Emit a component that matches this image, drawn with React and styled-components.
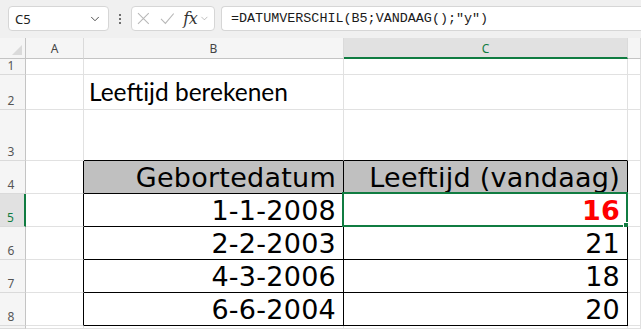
import React from "react";
import styled, { createGlobalStyle } from "styled-components";
import { ChevronDown } from "lucide-react";

const Global = createGlobalStyle`
  html, body { margin: 0; padding: 0; background: #ffffff; }
  body { font-family: "Noto Sans", "DejaVu Sans", sans-serif; overflow: hidden; }
  * { box-sizing: border-box; }
`;

const Page = styled.div`
  width: 641px;
  height: 329px;
  display: flex;
  flex-direction: column;
  overflow: hidden;
  background: #ffffff;
`;

const FormulaBar = styled.div`
  height: 38px;
  flex: none;
  display: flex;
  align-items: flex-start;
  padding: 6px 0 0 8px;
  background: #f0f0f0;
`;

const Box = styled.div`
  height: 25px;
  display: flex;
  align-items: center;
  background: #ffffff;
  border: 1px solid #d6d6d6;
  border-radius: 4px;
`;

const NameBox = styled(Box)`
  width: 101px;
  padding: 0 6px 0 6px;
  justify-content: space-between;
  font-family: "Noto Sans", sans-serif;
  font-size: 13px;
  color: #222;
`;

const Dots = styled.div`
  width: 22px;
  height: 25px;
  display: flex;
  flex-direction: column;
  align-items: center;
  justify-content: center;
  gap: 2px;
  & > i {
    display: block;
    width: 2px;
    height: 2px;
    border-radius: 1px;
    background: #444;
  }
`;

const IconBox = styled(Box)`
  width: 84px;
  padding: 0 4px 0 5px;
`;

const Spacer = styled.span`
  display: block;
  width: ${(p) => p.$w}px;
`;

const Fx = styled.span`
  font-family: "DejaVu Serif", "Liberation Serif", serif;
  font-style: italic;
  font-size: 16px;
  color: #333;
  margin-left: 9px;
  letter-spacing: -0.5px;
`;

const FormulaInput = styled(Box)`
  flex: 1;
  margin-left: 6px;
  border-right: none;
  border-radius: 4px 0 0 4px;
  padding-left: 9px;
  font-family: "Liberation Mono", "DejaVu Sans Mono", monospace;
  font-size: 13.4px;
  color: #1a1a1a;
`;

const Sheet = styled.div`
  flex: 1;
  display: grid;
  grid-template-columns: 26px 58px 260px 284px 1fr;
  grid-template-rows: 21px 16px 35px 51px repeat(5, 33px) 1fr;
`;

const Corner = styled.div`
  background: #f5f5f5;
  border-right: 1px solid #c4c4c4;
  border-bottom: 1px solid #c4c4c4;
  position: relative;
  &::after {
    content: "";
    position: absolute;
    right: 3px;
    bottom: 3px;
    width: 0;
    height: 0;
    border-left: 10px solid transparent;
    border-bottom: 10px solid #dadada;
  }
`;

const ColHead = styled.div`
  display: flex;
  align-items: center;
  justify-content: center;
  font-family: "Noto Sans", sans-serif;
  font-size: 12px;
  padding-top: 1px;
  color: ${(p) => (p.$sel ? "#107c41" : "#444")};
  background: ${(p) => (p.$sel ? "#e1e1e1" : "#f5f5f5")};
  border-right: 1px solid #dadada;
  border-bottom: ${(p) => (p.$sel ? "2px solid #107c41" : "1px solid #c4c4c4")};
`;

const RowHead = styled.div`
  display: flex;
  align-items: flex-end;
  justify-content: center;
  padding-bottom: 0;
  padding-right: 3px;
  font-family: "Noto Sans", sans-serif;
  font-size: 12px;
  line-height: 16px;
  color: ${(p) => (p.$sel ? "#107c41" : "#555")};
  background: ${(p) => (p.$sel ? "#e1e1e1" : "#f5f5f5")};
  border-bottom: 1px solid #dadada;
  border-right: ${(p) => (p.$sel ? "2px solid #107c41" : "1px solid #c4c4c4")};
`;

const Cell = styled.div`
  position: relative;
  display: flex;
  align-items: flex-end;
  justify-content: ${(p) => (p.$right ? "flex-end" : "flex-start")};
  background: ${(p) => p.$bg || "#ffffff"};
  border-right: 1px solid ${(p) => (p.$rb ? "#000" : "#e1e1e1")};
  border-bottom: 1px solid ${(p) => (p.$bb ? "#000" : "#e1e1e1")};
  min-width: 0;
`;

const Title = styled.span`
  font-family: "Lato", "Open Sans", sans-serif;
  font-size: 24.5px;
  line-height: 28px;
  color: #000;
  padding: 0 0 3px 5px;
  white-space: nowrap;
`;

const Big = styled.span`
  font-family: "DejaVu Sans", "Verdana", sans-serif;
  font-size: 27px;
  letter-spacing: 0.25px;
  line-height: 30px;
  color: ${(p) => (p.$red ? "#ff0000" : "#000")};
  font-weight: ${(p) => (p.$bold ? 700 : 400)};
  padding: 0 7px 0 0;
  white-space: nowrap;
`;

const Selection = styled.div`
  position: absolute;
  left: -2px;
  top: -2px;
  right: -1px;
  bottom: -1px;
  border: 2px solid #107c41;
  pointer-events: none;
  &::after {
    content: "";
    position: absolute;
    right: -4px;
    bottom: -4px;
    width: 5px;
    height: 5px;
    background: #107c41;
    border: 1px solid #fff;
  }
`;

const rows = [
  { n: 1, label: "1" },
  { n: 2, label: "2", title: "Leeftijd berekenen" },
  { n: 3, label: "3", under: true },
  { n: 4, label: "4", head: true, b: "Gebortedatum", c: "Leeftijd (vandaag)" },
  { n: 5, label: "5", b: "1-1-2008", c: "16", sel: true },
  { n: 6, label: "6", b: "2-2-2003", c: "21" },
  { n: 7, label: "7", b: "4-3-2006", c: "18" },
  { n: 8, label: "8", b: "6-6-2004", c: "20" },
  { n: 9, label: "" },
];

function XIcon() {
  return (
    <svg width="13" height="13" viewBox="0 0 13 13">
      <path d="M1 1 L12 12 M12 1 L1 12" stroke="#b8b8b8" strokeWidth="1.1" fill="none" />
    </svg>
  );
}

function CheckIcon() {
  return (
    <svg width="15" height="13" viewBox="0 0 15 13">
      <path d="M1 7 L5.5 11.5 L14 1.5" stroke="#b8b8b8" strokeWidth="1.1" fill="none" />
    </svg>
  );
}

export default function App() {
  return (
    <Page>
      <Global />
      <FormulaBar>
        <NameBox>
          <span>C5</span>
          <ChevronDown size={14} strokeWidth={1.6} color="#444" />
        </NameBox>
        <Dots>
          <i />
          <i />
          <i />
        </Dots>
        <IconBox>
          <XIcon />
          <Spacer $w={10} />
          <CheckIcon />
          <Fx>fx</Fx>
          <ChevronDown size={11} strokeWidth={1.4} color="#999" style={{ marginLeft: 2 }} />
        </IconBox>
        <FormulaInput>=DATUMVERSCHIL(B5;VANDAAG();"y")</FormulaInput>
      </FormulaBar>
      <Sheet>
        <Corner />
        <ColHead>A</ColHead>
        <ColHead>B</ColHead>
        <ColHead $sel>C</ColHead>
        <ColHead />
        {rows.map((r) => {
          const inTable = r.n >= 4 && r.n <= 8;
          return (
            <React.Fragment key={r.n}>
              <RowHead $sel={r.sel}>{r.label}</RowHead>
              <Cell $rb={inTable} />
              <Cell
                $rb={inTable}
                $bb={inTable || r.under}
                $right={!r.title}
                $bg={r.head ? "#c0c0c0" : undefined}
              >
                {r.title && <Title>{r.title}</Title>}
                {r.b && <Big>{r.b}</Big>}
              </Cell>
              <Cell
                $rb={inTable}
                $bb={inTable || r.under}
                $right
                $bg={r.head ? "#c0c0c0" : undefined}
              >
                {r.c && (
                  <Big $red={r.sel} $bold={r.sel}>
                    {r.c}
                  </Big>
                )}
                {r.sel && <Selection />}
              </Cell>
              <Cell />
            </React.Fragment>
          );
        })}
      </Sheet>
    </Page>
  );
}
